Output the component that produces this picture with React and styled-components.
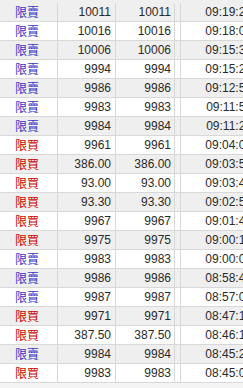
import React from "react"
import styled, { createGlobalStyle } from "styled-components"

const Global = createGlobalStyle`
  html, body {
    margin: 0;
    padding: 0;
    background: #ffffff;
    overflow: hidden;
  }
`

const Grid = styled.div`
  width: 243px;
  height: 388px;
  overflow: hidden;
  font-family: "Liberation Sans", Arial, "Noto Sans CJK TC", sans-serif;
  font-size: 12px;
  color: #2a2a2a;
  background: #f4f4f4;
`

const Row = styled.div`
  display: flex;
  width: 262px;
  height: 19px;
  box-sizing: border-box;
  border-bottom: 1px solid #d8d8d8;
  background: ${(p) => (p.$shade ? "#efefef" : "#ffffff")};
  &:first-child {
    height: 22px;
    padding-top: 3px;
  }
`

const Cell = styled.div`
  flex: 0 0 ${(p) => p.$w}px;
  box-sizing: border-box;
  border-right: 1px solid #d8d8d8;
  line-height: 18px;
  white-space: nowrap;
  overflow: hidden;
  text-align: right;
  padding-right: ${(p) => p.$right ?? 4}px;
`

const Side = styled.div`
  flex: 0 0 58px;
  display: flex;
  align-items: center;
  box-sizing: border-box;
  border-right: 1px solid #d8d8d8;
  padding-left: 15px;
`

const Label = styled.span`
  font-family: "Noto Sans CJK TC", "Liberation Sans", sans-serif;
  font-size: 12px;
  line-height: 18px;
  color: ${(p) => (p.$buy ? "#cc0000" : "#3434c8")};
`

const rows = [
  ["s", "10011", "09:19:27"],
  ["s", "10016", "09:18:03"],
  ["s", "10006", "09:15:34"],
  ["s", "9994", "09:15:21"],
  ["s", "9986", "09:12:58"],
  ["s", "9983", "09:11:52"],
  ["s", "9984", "09:11:20"],
  ["b", "9961", "09:04:06"],
  ["b", "386.00", "09:03:55"],
  ["b", "93.00", "09:03:41"],
  ["b", "93.30", "09:02:57"],
  ["b", "9967", "09:01:44"],
  ["b", "9975", "09:00:12"],
  ["s", "9983", "09:00:03"],
  ["s", "9986", "08:58:46"],
  ["s", "9987", "08:57:02"],
  ["b", "9971", "08:47:18"],
  ["b", "387.50", "08:46:13"],
  ["s", "9984", "08:45:29"],
  ["b", "9983", "08:45:07"],
]

export default function App() {
  return (
    <Grid>
      <Global />
      {rows.map(([side, price, time], i) => (
        <Row key={i} $shade={i % 2 === 0}>
          <Side>
            <Label $buy={side === "b"}>{side === "b" ? "限買" : "限賣"}</Label>
          </Side>
          <Cell $w={58}>{price}</Cell>
          <Cell $w={59} $right={3}>{price}</Cell>
          <Cell $w={6} $right={0} />
          <Cell $w={80} $right={8}>{time}</Cell>
        </Row>
      ))}
    </Grid>
  )
}
